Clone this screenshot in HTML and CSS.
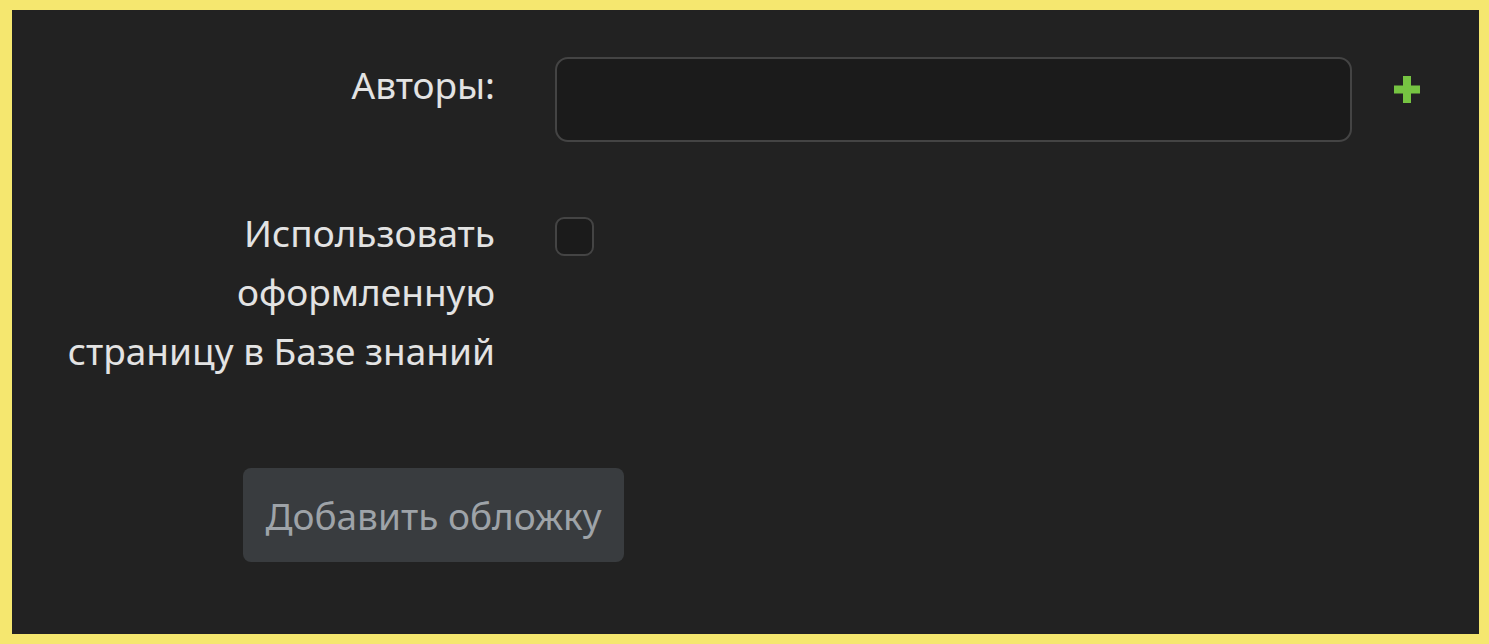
FILE: index.html
```html
<!DOCTYPE html>
<html lang="ru">
<head>
<meta charset="UTF-8">
<meta name="viewport" content="width=device-width, initial-scale=1.0">
<title>Добавить статью</title>
<link rel="stylesheet" href="styles.css">
</head>
<body>

<div id="panel">
  <form id="article-form">
    <div class="row">
      <label for="authors" class="label">Авторы:</label>
      <input type="text" id="authors" name="authors" class="field">
      <button type="button" class="add" title="Добавить автора">
        <svg width="26" height="27" viewBox="0 0 26 27"><path d="M9 0h8v9.5h9v8h-9V27H9v-9.5H0v-8h9z" fill="#76c442"/></svg>
      </button>
    </div>

    <div class="row row-check">
      <label for="kb_page" class="label">Использовать<br>оформленную<br>страницу в Базе знаний</label>
      <input type="checkbox" id="kb_page" name="kb_page" class="check">
    </div>

    <button type="button" class="cover">Добавить обложку</button>
  </form>
</div>

</body>
</html>
```

FILE: styles.css
```css
html, body {
  margin: 0;
  height: 100%;
}

body {
  background-color: #f5e76f;
  padding: 10px 10px 10px 12px;
  box-sizing: border-box;
  font-family: "Noto Sans", Arial, sans-serif;
}

#panel {
  background-color: #222222;
  height: 100%;
  padding-top: 47px;
  box-sizing: border-box;
}

.row {
  display: grid;
  grid-template-columns: 483px 797px auto;
  column-gap: 60px;
  align-items: start;
}

.label {
  text-align: right;
  white-space: nowrap;
  color: #e3e3e3;
  font-size: 37px;
  line-height: 59px;
  margin-top: -2px;
}

.field {
  height: 85px;
  box-sizing: border-box;
  background-color: #1b1b1b;
  border: 2px solid #444444;
  border-radius: 13px;
  color: #e3e3e3;
  font-size: 37px;
  padding: 0 20px;
  outline: none;
}

.add {
  background: none;
  border: none;
  padding: 0;
  margin: 19px 0 0 -18px;
  width: 26px;
  height: 27px;
  cursor: pointer;
  line-height: 0;
}

.row-check {
  margin-top: 63px;
}

.check {
  appearance: none;
  margin: 12px 0 0 0;
  width: 39px;
  height: 39px;
  box-sizing: border-box;
  background-color: #1b1b1b;
  border: 2px solid #444444;
  border-radius: 9px;
}

.cover {
  display: block;
  margin: 88px 0 0 231px;
  width: 381px;
  height: 94px;
  background-color: #393c3f;
  color: #9ea3a8;
  border: none;
  border-radius: 8px;
  font-family: "Noto Sans", Arial, sans-serif;
  font-size: 37px;
  padding: 0;
  cursor: pointer;
}
```
